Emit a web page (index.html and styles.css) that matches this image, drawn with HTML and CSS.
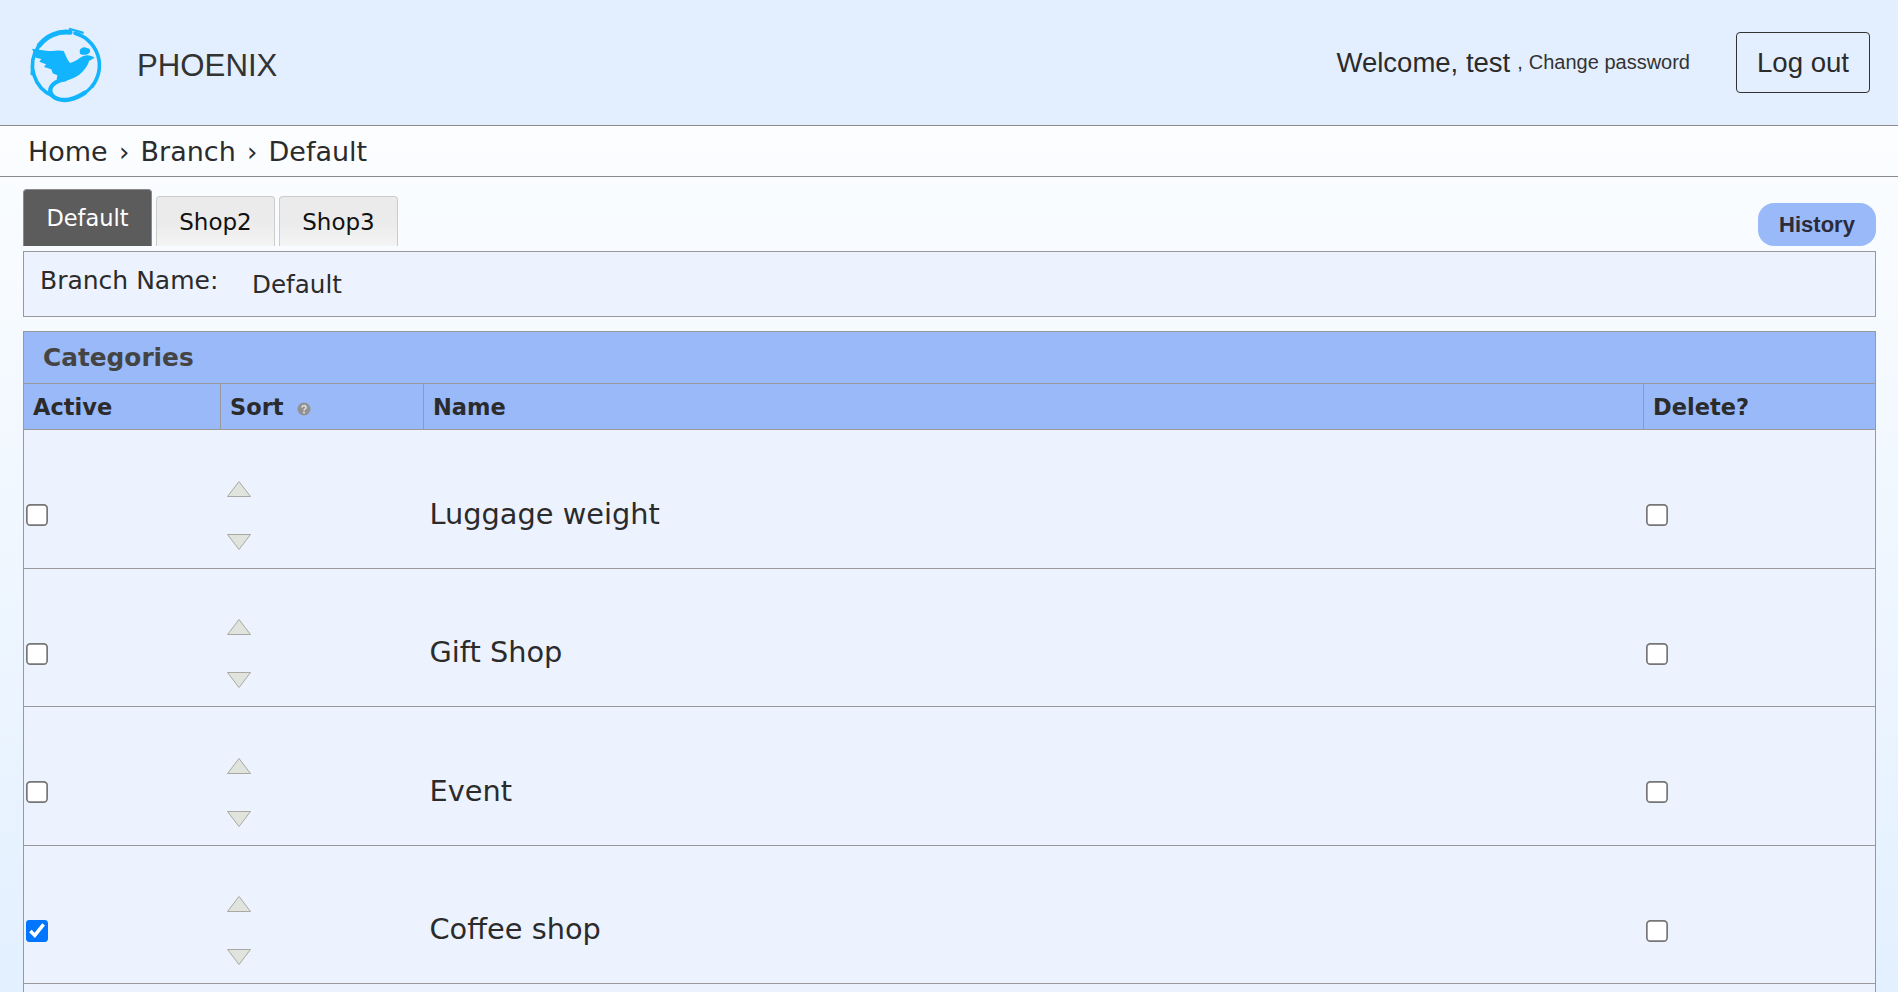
FILE: index.html
```html
<!DOCTYPE html>
<html lang="en">
<head>
<meta charset="utf-8">
<title>PHOENIX</title>
<link rel="stylesheet" href="styles.css">
</head>
<body>
<header class="topbar">
  <div class="brand">
    <svg class="logo" viewBox="0 0 270 270" width="90" height="90" aria-hidden="true">
      <g fill="none" stroke="#12b5fd" stroke-linecap="round">
        <path d="M58 76 A100 100 0 0 1 150 37" stroke-width="15"/>
        <path d="M150 27 L188 38" stroke-width="7"/>
        <path d="M165 40 A100 100 0 0 1 217 198" stroke-width="11"/>
        <path d="M217 198 A100 100 0 0 1 185 224" stroke-width="10"/>
        <path d="M55 80 A100 100 0 0 0 100 229" stroke-width="11"/>
        <path d="M37 120 L35 162" stroke-width="7"/>
        <path d="M135 178 C105 182 86 200 92 218 C98 236 125 244 150 238 C165 235 180 228 195 218" stroke-width="13"/>
      </g>
      <path fill="#12b5fd" d="M36 86 L84 93 C100 95 116 88 131 93 C138 108 142 120 150 129 C164 126 178 114 190 108 C202 103 214 106 224 113 L207 123 C203 140 188 158 172 168 C158 177 142 182 122 186 L110 178 L112 166 L98 160 L94 148 L72 141 L78 133 L58 125 L64 117 L48 113 Z"/>
      <path fill="#12b5fd" d="M179 92 C181 82 194 79 201 84 C210 84 213 94 208 99 C201 106 187 106 180 101 Z"/>
    </svg>
    <span class="brand-name">PHOENIX</span>
  </div>
  <div class="account">
    <span class="welcome">Welcome, test</span>
    <span class="comma">,</span>
    <a class="change" href="#">Change password</a>
    <button class="logout" type="button">Log out</button>
  </div>
</header>
<nav class="crumbs">Home <span class="sep">›</span> Branch <span class="sep">›</span> Default</nav>
<main class="page">
  <div class="tabbar">
    <a class="tab tab-on" href="#">Default</a>
    <a class="tab" href="#">Shop2</a>
    <a class="tab" href="#">Shop3</a>
    <button class="history" type="button">History</button>
  </div>
  <section class="branch">
    <span class="branch-label">Branch Name:</span>
    <span class="branch-value">Default</span>
  </section>
  <table class="cats">
    <colgroup>
      <col class="c-active"><col class="c-sort"><col class="c-name"><col class="c-del">
    </colgroup>
    <thead>
      <tr class="title-row"><th colspan="4">Categories</th></tr>
      <tr class="head-row">
        <th>Active</th>
        <th>Sort <svg class="help" viewBox="0 0 14 14" width="14" height="14" aria-hidden="true"><circle cx="7" cy="7" r="6.5" fill="#929292"/><path d="M5 5.6 C5 3 9 3 9 5.4 C9 7 7 7 7 8.4" fill="none" stroke="#e4e4e4" stroke-width="1.5"/><circle cx="7" cy="10.4" r="1" fill="#e4e4e4"/></svg></th>
        <th>Name</th>
        <th>Delete?</th>
      </tr>
    </thead>
    <tbody>
      <tr>
        <td class="box"><input type="checkbox"></td>
        <td class="arrows"><svg class="arrow" viewBox="0 0 24 16" width="24" height="16" aria-hidden="true"><path class="tri" d="M12 .5 L23.5 15.5 H.5 Z"/></svg><svg class="arrow" viewBox="0 0 24 16" width="24" height="16" aria-hidden="true"><path class="tri" d="M.5 .5 H23.5 L12 15.5 Z"/></svg></td>
        <td class="name">Luggage weight</td>
        <td class="box del"><input type="checkbox"></td>
      </tr>
      <tr>
        <td class="box"><input type="checkbox"></td>
        <td class="arrows"><svg class="arrow" viewBox="0 0 24 16" width="24" height="16" aria-hidden="true"><path class="tri" d="M12 .5 L23.5 15.5 H.5 Z"/></svg><svg class="arrow" viewBox="0 0 24 16" width="24" height="16" aria-hidden="true"><path class="tri" d="M.5 .5 H23.5 L12 15.5 Z"/></svg></td>
        <td class="name">Gift Shop</td>
        <td class="box del"><input type="checkbox"></td>
      </tr>
      <tr>
        <td class="box"><input type="checkbox"></td>
        <td class="arrows"><svg class="arrow" viewBox="0 0 24 16" width="24" height="16" aria-hidden="true"><path class="tri" d="M12 .5 L23.5 15.5 H.5 Z"/></svg><svg class="arrow" viewBox="0 0 24 16" width="24" height="16" aria-hidden="true"><path class="tri" d="M.5 .5 H23.5 L12 15.5 Z"/></svg></td>
        <td class="name">Event</td>
        <td class="box del"><input type="checkbox"></td>
      </tr>
      <tr>
        <td class="box"><input type="checkbox" checked></td>
        <td class="arrows"><svg class="arrow" viewBox="0 0 24 16" width="24" height="16" aria-hidden="true"><path class="tri" d="M12 .5 L23.5 15.5 H.5 Z"/></svg><svg class="arrow" viewBox="0 0 24 16" width="24" height="16" aria-hidden="true"><path class="tri" d="M.5 .5 H23.5 L12 15.5 Z"/></svg></td>
        <td class="name">Coffee shop</td>
        <td class="box del"><input type="checkbox"></td>
      </tr>
      <tr class="clipped">
        <td colspan="4"></td>
      </tr>
    </tbody>
  </table>
</main>
</body>
</html>
```
FILE: styles.css
```css
* { box-sizing: border-box; }
html, body { margin: 0; padding: 0; height: 992px; overflow: hidden; }
body {
  font-family: "DejaVu Sans", sans-serif;
  color: #2b2b2b;
  background: linear-gradient(180deg, #ffffff 0%, #e3f0ff 100%);
}
.topbar {
  height: 126px;
  background: #e3effe;
  border-bottom: 1px solid #8a8a8a;
  display: flex;
  align-items: center;
  justify-content: space-between;
  font-family: "Liberation Sans", sans-serif;
  padding: 0 28px 0 20px;
}
.brand { display: flex; align-items: center; }
.logo { display: block; margin-top: 4px; }
.brand-name { font-size: 31.2px; margin: 6px 0 0 27px; color: #333; }
.account { display: flex; align-items: center; }
.welcome { font-size: 27.5px; margin-top: 1px; }
.comma { font-size: 20px; margin-left: 7px; }
.change { font-size: 20px; color: #333; text-decoration: none; margin-left: 6px; }
.logout {
  font-family: inherit;
  font-size: 27.6px;
  color: #2b2b2b;
  width: 134px;
  height: 61px;
  margin-left: 46px;
  background: transparent;
  border: 1px solid #333;
  border-radius: 4px;
  padding: 0;
}
.crumbs {
  height: 51px;
  line-height: 52px;
  padding-left: 28px;
  font-size: 27px;
  border-bottom: 1px solid #8a8a8a;
  color: #2b2b2b;
  font-family: "DejaVu Sans", sans-serif;
}
.sep { font-size: 26px; margin: 0 2.6px; }
.page { padding: 11px 22px 0 23px; }
.tabbar { display: flex; align-items: flex-end; height: 58px; gap: 4px; }
.tab {
  height: 50px;
  width: 119px;
  display: flex;
  align-items: center;
  justify-content: center;
  font-size: 23px;
  color: #111;
  text-decoration: none;
  border: 1px solid #ccc;
  border-bottom: 0;
  border-radius: 4px 4px 0 0;
  background: linear-gradient(180deg, #ebebeb 0%, #ebebeb 50%, #f4f4f4 100%);
}
.tab-on {
  height: 57px;
  width: 129px;
  font-size: 22.5px;
  color: #fff;
  background: #5c5c5c;
  border-color: #8a8a8a;
}
.history {
  margin-left: auto;
  width: 118px;
  height: 43px;
  border: 0;
  padding: 0;
  border-radius: 16px;
  background: #99b9f9;
  color: #2b2b3a;
  font: bold 22px "Liberation Sans", sans-serif;
}
.branch {
  margin-top: 5px;
  height: 66px;
  background: #ecf2fe;
  border: 1px solid #999;
  display: flex;
  align-items: center;
  padding-left: 16px;
  font-size: 24.6px;
}
.branch-label { width: 212px; margin-top: -8px; font-size: 25px; }
.branch-value { margin-top: 1px; }
.cats {
  margin-top: 14px;
  width: 100%;
  table-layout: fixed;
  border-collapse: collapse;
  background: #ecf2fe;
  border: 1px solid #999;
}
.c-active { width: 197px; }
.c-sort { width: 203px; }
.c-name { width: 1220px; }
.title-row th {
  height: 52px;
  text-align: left;
  padding-left: 19px;
  font-size: 24.8px;
  color: #444;
  background: #99b9f9;
  border-bottom: 1px solid #999;
}
.head-row th {
  height: 46px;
  text-align: left;
  padding-left: 9px;
  font-size: 22.5px;
  color: #2b2b2b;
  background: #99b9f9;
  border: 1px solid #999;
}
.help { vertical-align: -1px; margin-left: 6px; }
tbody tr { height: 138.5px; border-bottom: 1px solid #999; }
tbody td { padding: 33px 0 0; vertical-align: middle; }
.box input { display: block; zoom: 1.692; margin: 0 0 0 .9px; }
.box.del input { margin-left: 1.5px; }
.arrows { padding-left: 6px; }
.arrow { display: block; }
.arrow + .arrow { margin-top: 37px; }
.tri { fill: #e0e4dc; stroke: #a9a9a1; stroke-width: 1; }
.name { font-size: 28.8px; padding: 30px 0 0 6px; color: #2b2b2b; }
```
